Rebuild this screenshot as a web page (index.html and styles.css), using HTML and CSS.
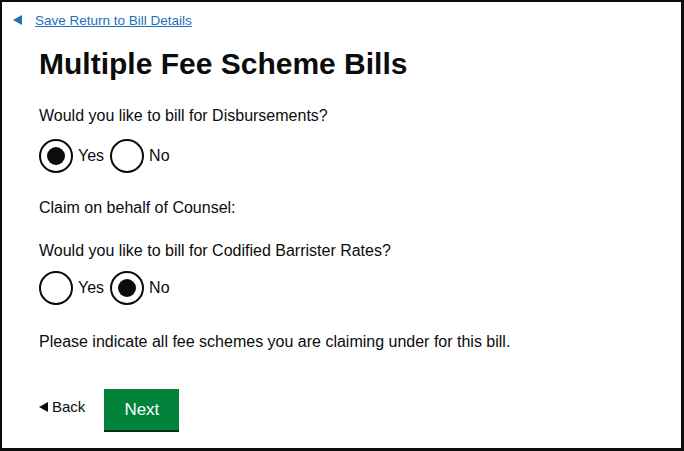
FILE: index.html
```html
<!DOCTYPE html>
<html lang="en">
<head>
<meta charset="utf-8">
<title>Multiple Fee Scheme Bills</title>
<link rel="stylesheet" href="styles.css">
</head>
<body>
<div class="frame">
  <div class="top-link">
    <span class="tri-left"></span>
    <a href="#" class="link">Save Return to Bill Details</a>
  </div>
  <h1 class="heading">Multiple Fee Scheme Bills</h1>

  <p class="question q1">Would you like to bill for Disbursements?</p>
  <div class="radios r1">
    <label class="radio"><span class="circle checked"></span><span class="rlabel">Yes</span></label>
    <label class="radio"><span class="circle"></span><span class="rlabel">No</span></label>
  </div>

  <p class="question q2">Claim on behalf of Counsel:</p>
  <p class="question q3">Would you like to bill for Codified Barrister Rates?</p>
  <div class="radios r2">
    <label class="radio"><span class="circle"></span><span class="rlabel">Yes</span></label>
    <label class="radio"><span class="circle checked"></span><span class="rlabel">No</span></label>
  </div>

  <p class="question q4">Please indicate all fee schemes you are claiming under for this bill.</p>

  <div class="actions">
    <a href="#" class="back"><span class="tri-small"></span>Back</a>
    <button class="btn" type="button">Next</button>
  </div>
</div>
</body>
</html>
```
FILE: styles.css
```css
html, body {
  margin: 0;
  padding: 0;
  background: #fff;
}
body {
  font-family: "Liberation Sans", Arial, sans-serif;
  color: #0b0c0c;
}
.frame {
  box-sizing: border-box;
  width: 684px;
  height: 451px;
  border-style: solid;
  border-color: #0b0c0c;
  border-width: 2px 3px 3px 2px;
  padding: 9px 0 0 37px;
}
.top-link {
  display: flex;
  align-items: center;
  margin-left: -26px;
  height: 18px;
}
.tri-left {
  width: 0;
  height: 0;
  border-top: 5px solid transparent;
  border-bottom: 5px solid transparent;
  border-right: 9px solid #1d70b8;
  margin-right: 13px;
}
.link {
  font-size: 13.5px;
  color: #1d70b8;
  text-decoration: underline;
}
.heading {
  margin: 18px 0 0 0;
  font-size: 30px;
  font-weight: bold;
  line-height: 34px;
}
.question {
  margin: 0;
  font-size: 16px;
  line-height: 20px;
}
.q1 { margin-top: 25px; }
.q2 { margin-top: 25px; }
.q3 { margin-top: 23px; }
.q4 { margin-top: 27px; }
.radios {
  display: flex;
  gap: 6px;
}
.r1 { margin-top: 13px; }
.r2 { margin-top: 10px; }
.radio {
  display: flex;
  align-items: center;
  gap: 5px;
  font-size: 16px;
}
.circle {
  box-sizing: border-box;
  width: 34px;
  height: 34px;
  border: 2px solid #0b0c0c;
  border-radius: 50%;
  display: flex;
  align-items: center;
  justify-content: center;
}
.circle.checked::after {
  content: "";
  width: 18px;
  height: 18px;
  border-radius: 50%;
  background: #0b0c0c;
}
.actions {
  display: flex;
  align-items: flex-start;
  gap: 19px;
  margin-top: 37px;
}
.back {
  display: flex;
  align-items: center;
  font-size: 15px;
  color: #0b0c0c;
  text-decoration: none;
  margin-top: 9px;
}
.tri-small {
  width: 0;
  height: 0;
  border-top: 5px solid transparent;
  border-bottom: 5px solid transparent;
  border-right: 9px solid #0b0c0c;
  margin-right: 4px;
}
.btn {
  width: 75px;
  height: 41px;
  background: #00823b;
  border: 0;
  box-shadow: 0 2px 0 #002d18;
  color: #fff;
  font-family: "Liberation Sans", Arial, sans-serif;
  font-size: 17px;
  padding: 0;
  cursor: pointer;
}
```
